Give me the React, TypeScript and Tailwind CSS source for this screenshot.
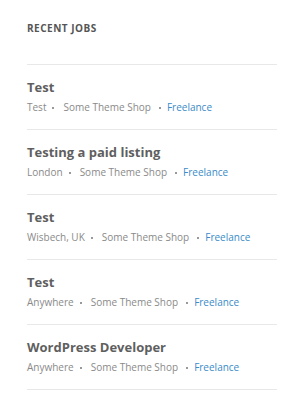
const jobs = [
  { title: "Test", location: "Test" },
  { title: "Testing a paid listing", location: "London" },
  { title: "Test", location: "Wisbech, UK" },
  { title: "Test", location: "Anywhere" },
  { title: "WordPress Developer", location: "Anywhere" },
]

export default function App() {
  return (
    <div className="min-h-screen bg-white px-[27px] pt-[21px] font-['Open_Sans',sans-serif]">
      <aside className="w-[250px]">
        <h3 className="text-[10px] font-bold uppercase leading-[14px] tracking-[0.5px] text-[#555]">Recent Jobs</h3>

        <ul className="mt-[29px] border-t border-[#e8e8e8]">
          {jobs.map((job, i) => (
            <li key={i} className="border-b border-[#e8e8e8] pt-[13px] pb-[14px]">
              <a className="block text-[13px] font-bold leading-[18px] text-[#5f5f5f]">{job.title}</a>
              <div className="mt-[4px] flex items-center whitespace-nowrap text-[10px] leading-[15px] text-[#8a8a8a]">
                <span>{job.location}</span>
                <span className="ml-[6px] mr-[9px] h-[2px] w-[2px] bg-[#999]" />
                <span>Some Theme Shop</span>
                <span className="ml-[8px] mr-[6px] h-[2px] w-[2px] bg-[#999]" />
                <span className="text-[#3a8bc8]">Freelance</span>
              </div>
            </li>
          ))}
        </ul>
      </aside>
    </div>
  )
}
